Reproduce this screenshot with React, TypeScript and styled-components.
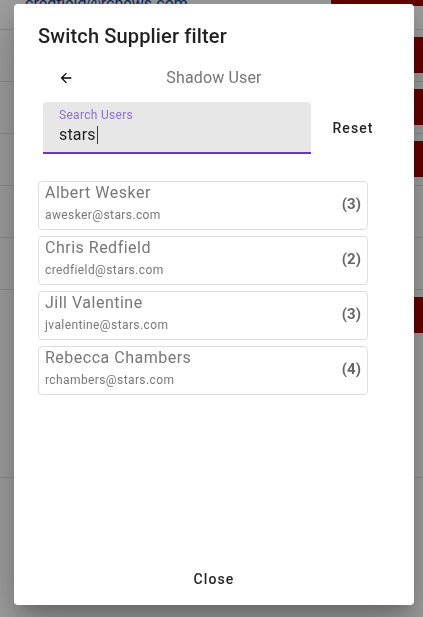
import React from 'react';
import styled, { createGlobalStyle } from 'styled-components';

const GlobalStyle = createGlobalStyle`
  html, body {
    margin: 0;
    padding: 0;
    width: 100%;
    height: 100%;
    overflow: hidden;
    background: #ffffff;
  }
  body {
    font-family: Roboto, "Noto Sans", "Liberation Sans", Arial, sans-serif;
    -webkit-font-smoothing: antialiased;
  }
  * { box-sizing: border-box; }
`;

/* ---------- background page (behind the dialog) ---------- */

const Page = styled.div`
  width: 100%;
  margin-top: -37px;
  overflow: hidden;
`;

const PageRow = styled.div<{ $h: number }>`
  display: flex;
  align-items: flex-start;
  justify-content: space-between;
  height: ${(p) => p.$h}px;
  padding: 7px 0 0 25px;
  border-bottom: 1px solid #e0e0e0;
`;

const RowText = styled.div`
  display: flex;
  flex-direction: column;
  padding-top: 24px;
`;

const RowEmail = styled.div`
  font-size: 16px;
  line-height: 20px;
  color: #1a3e8c;
`;

const ViewButton = styled.div`
  width: 92px;
  height: 36px;
  border-radius: 4px 0 0 4px;
  background: #a40000;
  color: #fff;
  font-size: 15px;
  font-weight: 500;
  letter-spacing: 1px;
  display: flex;
  align-items: center;
  padding-left: 24px;
`;

/* ---------- dialog ---------- */

const Backdrop = styled.div`
  position: fixed;
  inset: 0;
  background: rgba(0, 0, 0, 0.38);
  display: flex;
  align-items: flex-start;
  justify-content: flex-start;
  padding: 4px 0 0 14px;
`;

const Dialog = styled.div`
  width: 400px;
  height: 601px;
  background: #fff;
  border-radius: 4px;
  box-shadow: 0px 11px 15px -7px rgba(0, 0, 0, 0.2),
    0px 24px 38px 3px rgba(0, 0, 0, 0.14), 0px 9px 46px 8px rgba(0, 0, 0, 0.12);
  display: flex;
  flex-direction: column;
`;

const Title = styled.h2`
  margin: 0;
  padding: 16px 24px 0;
  font-size: 20px;
  font-weight: 500;
  line-height: 32px;
  letter-spacing: 0.15px;
  color: rgba(0, 0, 0, 0.87);
`;

const HeaderRow = styled.div`
  margin-top: 10px;
  height: 32px;
  padding: 0 24px;
  display: grid;
  grid-template-columns: 1fr auto 1fr;
  align-items: center;
`;

const BackButton = styled.button`
  justify-self: start;
  margin-left: 20px;
  width: 16px;
  height: 16px;
  padding: 0;
  border: none;
  background: transparent;
  display: flex;
  color: #000;
  svg { width: 16px; height: 16px; display: block; }
`;

const HeaderTitle = styled.div`
  font-size: 16px;
  line-height: 24px;
  letter-spacing: 0.15px;
  color: #757575;
`;

const SearchRow = styled.div`
  margin-top: 8px;
  padding-left: 29px;
  display: flex;
  align-items: center;
`;

const Field = styled.div`
  width: 268px;
  height: 52px;
  background: #e7e7e7;
  border-radius: 4px 4px 0 0;
  border-bottom: 2px solid #673ab7;
  padding: 5px 12px 0 16px;
  display: flex;
  flex-direction: column;
`;

const FieldLabel = styled.div`
  font-size: 12px;
  line-height: 16px;
  letter-spacing: 0.3px;
  color: #8f6fcf;
`;

const FieldValue = styled.div`
  display: flex;
  align-items: center;
  font-size: 16px;
  line-height: 24px;
  letter-spacing: 0.15px;
  color: rgba(0, 0, 0, 0.87);
`;

const Caret = styled.span`
  display: inline-block;
  width: 1px;
  height: 18px;
  margin-left: 1px;
  background: #3f2a8a;
`;

const TextButton = styled.button`
  height: 36px;
  min-width: 64px;
  padding: 0 8px;
  border: none;
  background: transparent;
  font-family: inherit;
  font-size: 14px;
  font-weight: 500;
  letter-spacing: 1.1px;
  color: rgba(0, 0, 0, 0.87);
  display: flex;
  align-items: center;
  justify-content: center;
`;

const ResetButton = styled(TextButton)`
  margin-left: 10px;
`;

const UserList = styled.div`
  margin-top: 27px;
  padding-left: 24px;
  display: flex;
  flex-direction: column;
  gap: 6px;
`;

const UserCard = styled.div`
  width: 330px;
  border: 1px solid #dedede;
  border-radius: 4px;
  padding: 1px 6px 4px 6px;
  display: flex;
  align-items: center;
  justify-content: space-between;
`;

const UserInfo = styled.div`
  display: flex;
  flex-direction: column;
`;

const UserName = styled.div`
  font-size: 16px;
  line-height: 20px;
  letter-spacing: 0.5px;
  color: #777;
`;

const UserEmail = styled.div`
  margin-top: 2px;
  font-size: 12px;
  line-height: 20px;
  letter-spacing: 0.4px;
  color: #777;
`;

const UserCount = styled.div`
  font-size: 15px;
  font-weight: 700;
  color: #666;
`;

const Footer = styled.div`
  margin-top: auto;
  padding: 8px;
  display: flex;
  justify-content: center;
`;

const backgroundRows = [
  { h: 67, email: 'credfield@rcnews.com', view: 'View 31' },
  { h: 52, email: '', view: ' ' },
  { h: 52, email: '', view: ' ' },
  { h: 52, email: '', view: ' ' },
  { h: 52, email: '', view: '' },
  { h: 52, email: '', view: '' },
  { h: 188, email: '', view: ' ' },
  { h: 140, email: '', view: '' },
];

const users = [
  { name: 'Albert Wesker', email: 'awesker@stars.com', count: 3 },
  { name: 'Chris Redfield', email: 'credfield@stars.com', count: 2 },
  { name: 'Jill Valentine', email: 'jvalentine@stars.com', count: 3 },
  { name: 'Rebecca Chambers', email: 'rchambers@stars.com', count: 4 },
];

export default function App() {
  return (
    <>
      <GlobalStyle />
      <Page>
        {backgroundRows.map((r, i) => (
          <PageRow key={i} $h={r.h}>
            <RowText>{r.email && <RowEmail>{r.email}</RowEmail>}</RowText>
            {r.view && <ViewButton>{r.view.trim()}</ViewButton>}
          </PageRow>
        ))}
      </Page>
      <Backdrop>
        <Dialog role="dialog">
          <Title>Switch Supplier filter</Title>
          <HeaderRow>
            <BackButton aria-label="back">
              <svg viewBox="0 0 24 24" fill="currentColor">
                <path d="M20 11H7.83l5.59-5.59L12 4l-8 8 8 8 1.41-1.41L7.83 13H20v-2z" />
              </svg>
            </BackButton>
            <HeaderTitle>Shadow User</HeaderTitle>
          </HeaderRow>
          <SearchRow>
            <Field>
              <FieldLabel>Search Users</FieldLabel>
              <FieldValue>
                stars
                <Caret />
              </FieldValue>
            </Field>
            <ResetButton>Reset</ResetButton>
          </SearchRow>
          <UserList>
            {users.map((u) => (
              <UserCard key={u.email}>
                <UserInfo>
                  <UserName>{u.name}</UserName>
                  <UserEmail>{u.email}</UserEmail>
                </UserInfo>
                <UserCount>({u.count})</UserCount>
              </UserCard>
            ))}
          </UserList>
          <Footer>
            <TextButton>Close</TextButton>
          </Footer>
        </Dialog>
      </Backdrop>
    </>
  );
}
